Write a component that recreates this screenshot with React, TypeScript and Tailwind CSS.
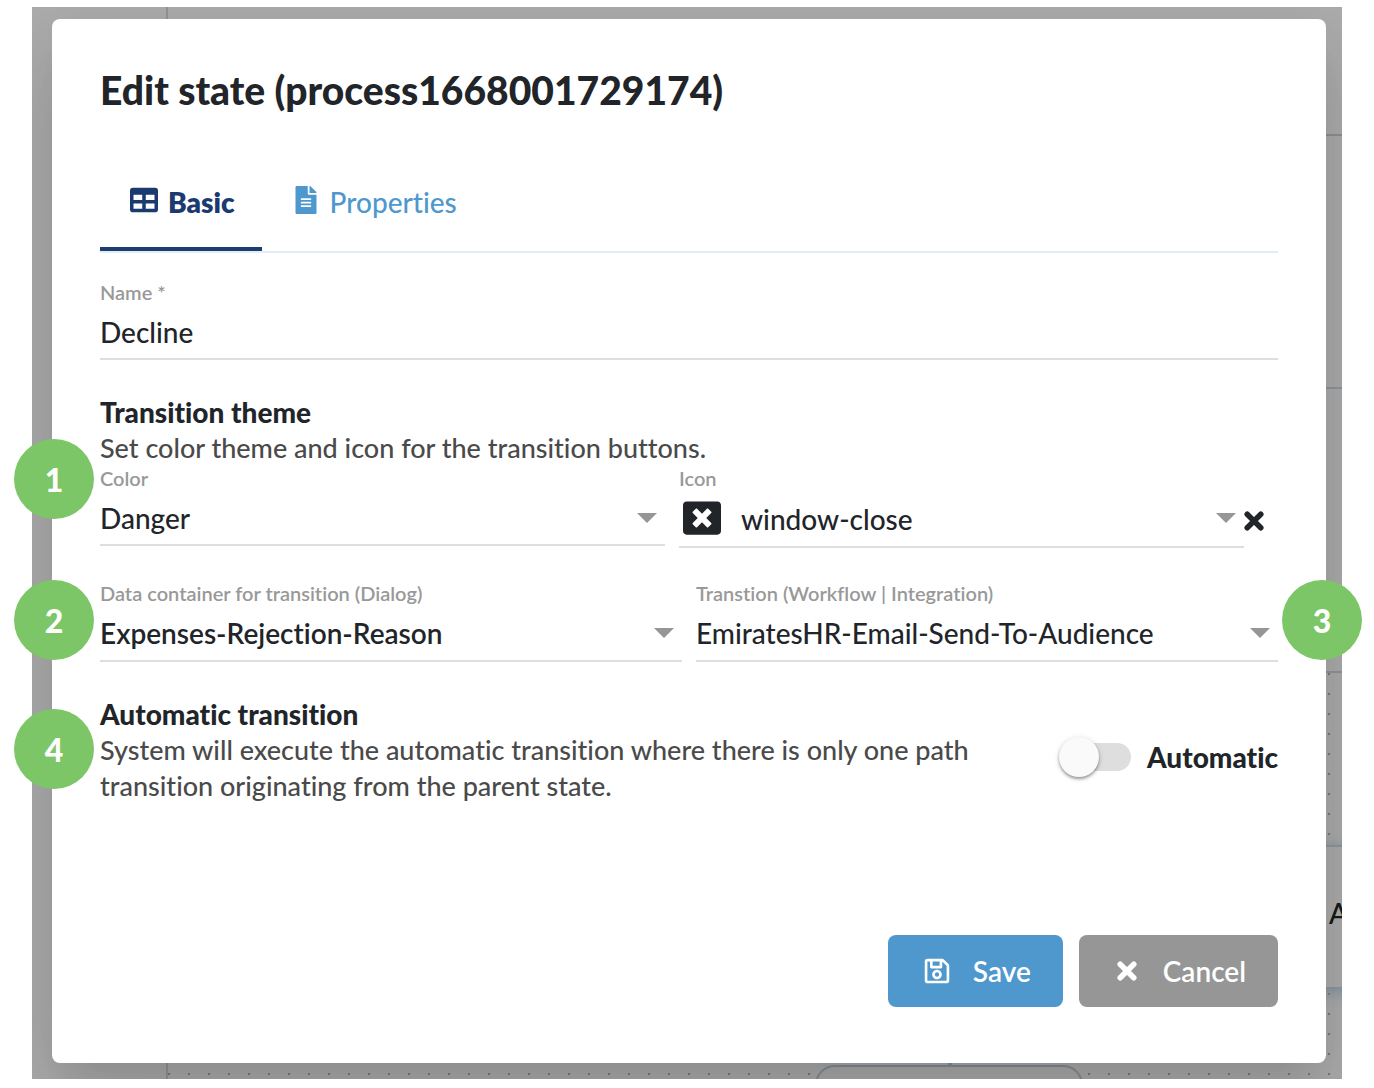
import { useState } from 'react';
import type { ReactNode } from 'react';
import { FaTable, FaFileAlt, FaWindowClose, FaRegSave } from 'react-icons/fa';

const tabs = [
  { id: 'basic', label: 'Basic', icon: <FaTable className="size-7" /> },
  { id: 'properties', label: 'Properties', icon: <FaFileAlt className="size-7" /> },
];

function CrossIcon({ className = '' }: { className?: string }) {
  return (
    <svg viewBox="0 0 28 28" className={`size-7 ${className}`} fill="none" stroke="currentColor" strokeWidth="5.5" strokeLinecap="round">
      <path d="M7.2 7.2l13.6 13.6M20.8 7.2L7.2 20.8" />
    </svg>
  );
}

function Badge({ value, className }: { value: number; className: string }) {
  return (
    <span
      className={`absolute flex size-20 items-center justify-center rounded-full bg-[#7dc667] pt-0.5 text-[32px] font-black text-white ${className}`}
    >
      {value}
    </span>
  );
}

function FieldLabel({ htmlFor, children }: { htmlFor: string; children: ReactNode }) {
  return (
    <label htmlFor={htmlFor} className="block h-6 text-[20px] leading-[22px] font-semibold text-[#999999]">
      {children}
    </label>
  );
}

interface SelectFieldProps {
  id: string;
  label: string;
  options: string[];
  className?: string;
  selectClassName?: string;
  icon?: ReactNode;
}

function SelectField({ id, label, options, className = '', selectClassName = 'h-[55px]', icon }: SelectFieldProps) {
  return (
    <div className={`min-w-0 flex-1 ${className}`}>
      <FieldLabel htmlFor={id}>{label}</FieldLabel>
      <div className="relative">
        {icon}
        <select
          id={id}
          className={`block w-full appearance-none border-b-2 border-[#dedede] bg-transparent pr-10 text-[#212529] outline-none ${selectClassName}`}
        >
          {options.map(option => (
            <option key={option}>{option}</option>
          ))}
        </select>
        <svg viewBox="0 0 20 10" className="pointer-events-none absolute top-[22px] right-2 h-[10px] w-5 fill-[#969696]">
          <path d="M0 0h20L10 10z" />
        </svg>
      </div>
    </div>
  );
}

// Process editor visible behind the dialog
function EditorCanvas() {
  return (
    <div className="absolute inset-0 flex" aria-hidden="true">
      <div className="w-[136px] border-r-2 border-[#d9dee2]" />
      <div className="flex flex-1 flex-col">
        <div className="h-[129px] border-b-2 border-[#d4d4d4]" />
        <div className="h-[253px] border-b-2 border-[#d3dfe8]" />
        <div className="h-[284px] border-b-2 border-[#d3dfe8]" />
        <div className="relative flex-1 bg-[radial-gradient(circle_at_1px_1px,#b4b4b4_1px,transparent_1px)] bg-size-[20px_20px]">
          <div className="absolute top-[172px] -right-[120px] flex h-[142px] w-[200px] items-center border-t-2 border-[#d3dfe8] bg-white pb-2 pl-[67px] text-[#212529] shadow-[0_4px_16px_#b8d3e6]">
            A
          </div>
          <div className="absolute top-[382px] left-[780px] h-[10px] w-1 bg-[#c6d6e2]" />
          <div className="absolute top-[392px] left-[647px] h-20 w-[268px] rounded-[20px] border-2 border-[#c6d6e2] bg-white" />
        </div>
      </div>
      <div className="absolute inset-0 bg-black/32" />
    </div>
  );
}

export default function App() {
  const [activeTab, setActiveTab] = useState('basic');
  const [name, setName] = useState('Decline');
  const [automatic, setAutomatic] = useState(false);

  return (
    <main className="relative bg-white px-8 pt-[7px] pb-[9px] font-['Lato',sans-serif] text-[28px] leading-9 font-medium text-[#212529] [font-variant-ligatures:none]">
      <div className="relative overflow-hidden pt-3 pr-4 pb-4 pl-5">
        <EditorCanvas />

        <div
          role="dialog"
          aria-labelledby="dialog-title"
          className="relative rounded-lg bg-white px-12 pt-12 pb-14 shadow-[0_22px_30px_-14px_rgba(0,0,0,0.06),0_48px_76px_6px_rgba(0,0,0,0.09),0_18px_92px_16px_rgba(0,0,0,0.07)]"
        >
          <h1 id="dialog-title" className="text-[39px] leading-[46px] font-black">
            Edit state (process1668001729174)
          </h1>

          <div role="tablist" className="mt-[42px] flex h-[98px] border-b-2 border-[#e1eef7]">
            {tabs.map(tab => (
              <button
                key={tab.id}
                type="button"
                role="tab"
                aria-selected={activeTab === tab.id}
                onClick={() => setActiveTab(tab.id)}
                className={`flex items-center gap-2.5 border-b-4 pt-0.5 pr-[27px] pl-[30px] ${
                  activeTab === tab.id
                    ? 'border-[#1a3e72] font-extrabold text-[#1a3a70]'
                    : 'border-transparent text-[#4f98ce]'
                }`}
              >
                <span className="pb-1">{tab.icon}</span>
                {tab.label}
              </button>
            ))}
          </div>

          <div className="mt-7">
            <FieldLabel htmlFor="name">Name *</FieldLabel>
            <input
              id="name"
              value={name}
              onChange={e => setName(e.target.value)}
              className="block h-[55px] w-full border-b-2 border-[#dedede] outline-none"
            />
          </div>

          <h2 className="mt-[34px] font-black">Transition theme</h2>
          <p className="pb-px text-[27px] text-[#4a4a4a]">Set color theme and icon for the transition buttons.</p>
          <div className="flex items-start">
            <SelectField id="color" label="Color" options={['Danger', 'Primary', 'Success']} />
            <SelectField
              id="icon"
              label="Icon"
              options={['window-close', 'check', 'save']}
              className="ml-3.5"
              selectClassName="h-[57px] pl-[62px]"
              icon={<FaWindowClose className="pointer-events-none absolute top-2 left-1 size-[38px]" />}
            />
            <button type="button" aria-label="Clear icon" className="mt-10 w-[34px] pr-3.5">
              <CrossIcon className="-ml-1" />
            </button>
          </div>

          <div className="mt-[34px] flex gap-3.5">
            <SelectField
              id="container"
              label="Data container for transition (Dialog)"
              options={['Expenses-Rejection-Reason']}
              selectClassName="h-[56px] font-semibold"
            />
            <SelectField
              id="workflow"
              label="Transtion (Workflow | Integration)"
              options={['EmiratesHR-Email-Send-To-Audience']}
              selectClassName="h-[56px]"
            />
          </div>

          <div className="mt-[34px] flex items-center justify-between">
            <div className="max-w-[900px]">
              <h2 className="font-black">Automatic transition</h2>
              <p className="text-[27px] text-[#4a4a4a]">
                System will execute the automatic transition where there is only one path transition originating from the
                parent state.
              </p>
            </div>
            <label className="flex items-center gap-4 pt-3.5 font-black">
              <input
                type="checkbox"
                role="switch"
                checked={automatic}
                onChange={e => setAutomatic(e.target.checked)}
                className="peer sr-only"
              />
              <span className="flex h-7 w-[72px] items-center rounded-full bg-[linear-gradient(90deg,transparent_20px,#dedede_20px)] peer-checked:justify-end">
                <span className="size-10 rounded-full bg-[#fafafa] shadow-[0_2px_3px_rgba(0,0,0,0.35),0_1px_6px_rgba(0,0,0,0.12)]" />
              </span>
              Automatic
            </label>
          </div>

          <div className="mt-[131px] flex justify-end gap-4">
            <button type="button" className="flex h-[72px] items-center gap-[22px] rounded-lg bg-[#4f98ce] pr-8 pl-[35px] font-semibold text-white">
              <FaRegSave className="size-7" />
              Save
            </button>
            <button type="button" className="flex h-[72px] items-center gap-[22px] rounded-lg bg-[#969696] pr-8 pl-[34px] font-semibold text-white">
              <CrossIcon />
              Cancel
            </button>
          </div>
        </div>
      </div>

      <Badge value={1} className="top-[439px] left-3.5" />
      <Badge value={2} className="top-[580px] left-3.5" />
      <Badge value={3} className="top-[580px] right-3" />
      <Badge value={4} className="top-[709px] left-3.5" />
    </main>
  );
}
